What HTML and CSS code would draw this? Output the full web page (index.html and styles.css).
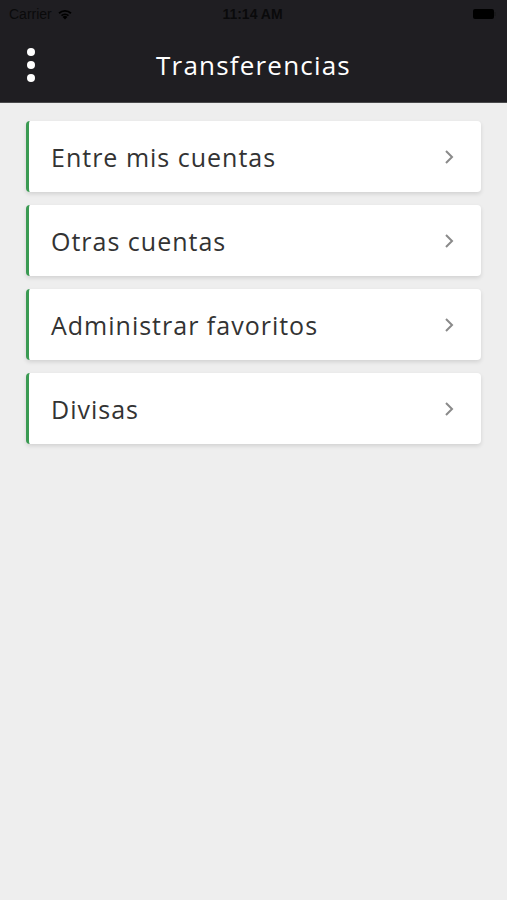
FILE: index.html
```html
<!DOCTYPE html>
<html>
<head>
    <title>Transferencias</title>
    <link rel="stylesheet" href="styles.css">
</head>
<body>
    <div class="status-bar">
        <div class="carrier">Carrier
            <svg class="wifi" width="16" height="12" viewBox="0 0 16 12">
                <path d="M8 11.5 L5.6 8.9 A3.5 3.5 0 0 1 10.4 8.9 Z" fill="#000"/>
                <path d="M3.9 7.1 A6 6 0 0 1 12.1 7.1 L10.9 8.3 A4.3 4.3 0 0 0 5.1 8.3 Z" fill="#000"/>
                <path d="M1.4 4.6 A9.5 9.5 0 0 1 14.6 4.6 L13.3 5.9 A7.7 7.7 0 0 0 2.7 5.9 Z" fill="#000"/>
            </svg>
        </div>
        <div class="clock">11:14 AM</div>
        <div class="battery"><span class="battery-body"></span><span class="battery-nub"></span></div>
    </div>

    <div class="nav-bar">
        <button class="menu-button">
            <span class="dot"></span><span class="dot"></span><span class="dot"></span>
        </button>
        <h1 class="nav-title">Transferencias</h1>
    </div>

    <div class="menu-list">
        <a class="menu-item" href="#">
            <span>Entre mis cuentas</span>
            <svg class="chevron" width="10" height="16" viewBox="0 0 10 16"><path d="M2 2 L8 8 L2 14" fill="none" stroke="#8a8a8a" stroke-width="2"/></svg>
        </a>
        <a class="menu-item" href="#">
            <span>Otras cuentas</span>
            <svg class="chevron" width="10" height="16" viewBox="0 0 10 16"><path d="M2 2 L8 8 L2 14" fill="none" stroke="#8a8a8a" stroke-width="2"/></svg>
        </a>
        <a class="menu-item" href="#">
            <span>Administrar favoritos</span>
            <svg class="chevron" width="10" height="16" viewBox="0 0 10 16"><path d="M2 2 L8 8 L2 14" fill="none" stroke="#8a8a8a" stroke-width="2"/></svg>
        </a>
        <a class="menu-item" href="#">
            <span>Divisas</span>
            <svg class="chevron" width="10" height="16" viewBox="0 0 10 16"><path d="M2 2 L8 8 L2 14" fill="none" stroke="#8a8a8a" stroke-width="2"/></svg>
        </a>
    </div>
</body>
</html>
```

FILE: styles.css
```css
/* General styles */
* {
  box-sizing: border-box;
}

body {
  font-family: "Open Sans", sans-serif;
  margin: 0;
  padding: 0;
  background-color: #eeeeee;
  min-height: 900px;
}

/* Status bar */
.status-bar {
  height: 28px;
  background-color: #1f1e22;
  display: flex;
  align-items: center;
  justify-content: space-between;
  padding: 0 11px 0 9px;
  font-family: "Liberation Sans", sans-serif;
  font-size: 14px;
  color: #0a0a0b;
}

.carrier {
  flex: 1;
  display: flex;
  align-items: center;
  gap: 5px;
}

.clock {
  font-weight: bold;
}

.battery {
  flex: 1;
  display: flex;
  justify-content: flex-end;
  align-items: center;
}

.battery-body {
  width: 21px;
  height: 10px;
  background-color: #000;
  border-radius: 2px;
}

.battery-nub {
  width: 2px;
  height: 4px;
  background-color: #1a1a1c;
}

/* Nav bar */
.nav-bar {
  height: 75px;
  background-color: #1f1e22;
  border-bottom: 1px solid #4a4a4c;
  display: flex;
  align-items: center;
  position: relative;
}

.menu-button {
  background: none;
  border: none;
  padding: 0;
  margin-left: 27px;
  width: 9px;
  display: flex;
  flex-direction: column;
  gap: 5px;
  cursor: pointer;
}

.dot {
  width: 8px;
  height: 8px;
  border-radius: 50%;
  background-color: #fff;
}

.nav-title {
  flex: 1;
  margin: 0 36px 0 0;
  text-align: center;
  color: #fff;
  font-weight: normal;
  font-size: 26px;
  letter-spacing: 1.2px;
}

/* Menu list */
.menu-list {
  padding: 18px 26px 0 26px;
  display: flex;
  flex-direction: column;
  gap: 13px;
}

.menu-item {
  height: 71px;
  background-color: #fff;
  border-left: 3px solid #3a9a52;
  border-radius: 4px;
  box-shadow: 0 2px 4px rgba(0, 0, 0, 0.12);
  display: flex;
  align-items: center;
  justify-content: space-between;
  padding: 0 27px 0 22px;
  text-decoration: none;
  color: #333333;
  font-size: 25px;
  letter-spacing: 1px;
}

.chevron {
  flex-shrink: 0;
}
```
